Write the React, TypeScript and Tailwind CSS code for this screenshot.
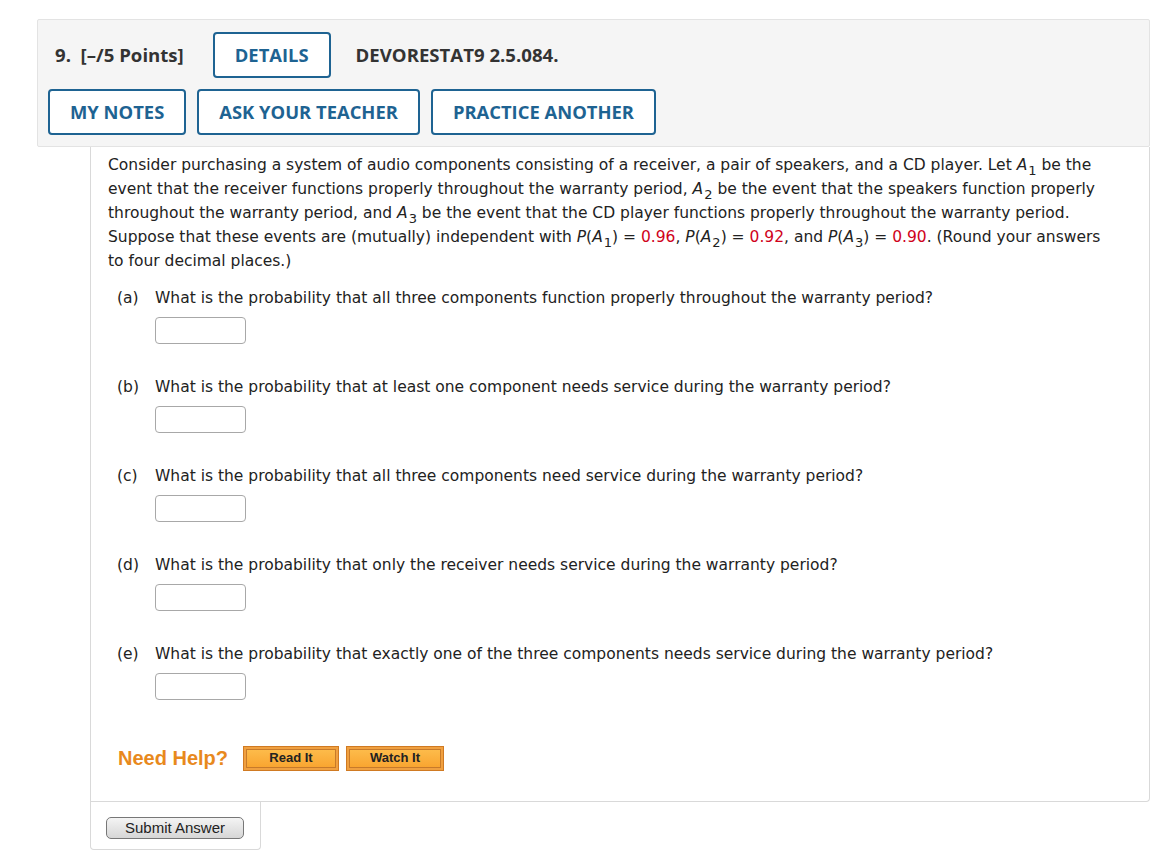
import React from 'react';

const parts = [
  { label: '(a)', text: 'What is the probability that all three components function properly throughout the warranty period?' },
  { label: '(b)', text: 'What is the probability that at least one component needs service during the warranty period?' },
  { label: '(c)', text: 'What is the probability that all three components need service during the warranty period?' },
  { label: '(d)', text: 'What is the probability that only the receiver needs service during the warranty period?' },
  { label: '(e)', text: 'What is the probability that exactly one of the three components needs service during the warranty period?' },
];

function A({ n }: { n: number }) {
  return (
    <>
      <i>A</i>
      <sub className="text-[13px] relative top-[5px] align-baseline ml-[1px]">{n}</sub>
    </>
  );
}

function Red({ children }: { children: React.ReactNode }) {
  return <span className="text-[#d0021b]">{children}</span>;
}

function BlueButton({ children }: { children: React.ReactNode }) {
  return (
    <button className="h-[46px] px-[20px] border-2 border-[#1e6392] rounded-[4px] bg-white text-[#1e6392] text-[18.4px] font-bold">
      {children}
    </button>
  );
}

function OrangeButton({ children, w }: { children: React.ReactNode; w: string }) {
  return (
    <button className={`${w} h-[25px] bg-[#f0a040] border border-[#d07a22] p-[2px]`}>
      <span className="flex h-full items-center justify-center border border-[#c77a2a] bg-gradient-to-b from-[#fdbb4a] to-[#f9a530] text-[13px] font-bold text-[#222] font-['Liberation_Sans',Arial,sans-serif]">
        {children}
      </span>
    </button>
  );
}

export default function App() {
  return (
    <div className="min-h-screen bg-white pt-[19px] font-['Open_Sans',sans-serif]">
      <div className="ml-[37px] w-[1113px] h-[128px] bg-[#f5f5f5] border border-[#e3e3e3] rounded-[2px] pl-[10px] pt-[12px]">
        <div className="flex items-center h-[46px]">
          <span className="ml-[7px] text-[18.6px] font-bold text-[#333]">9.&nbsp;&nbsp;[–/5 Points]</span>
          <span className="ml-[29px]"><BlueButton>DETAILS</BlueButton></span>
          <span className="ml-[25px] text-[18.6px] font-bold text-[#333]">DEVORESTAT9 2.5.084.</span>
        </div>
        <div className="flex items-center gap-[11px] mt-[11px]">
          <BlueButton>MY NOTES</BlueButton>
          <BlueButton>ASK YOUR TEACHER</BlueButton>
          <BlueButton>PRACTICE ANOTHER</BlueButton>
        </div>
      </div>

      <div className="ml-[90px] w-[1060px] border-l border-r border-b border-[#d9d9d9] rounded-br-[4px] pl-[17px] pt-[6px] pb-[28px] font-['DejaVu_Sans',Verdana,sans-serif] text-[15.5px] text-[#222]">
        <p className="leading-[24px] pr-[40px]">
          Consider purchasing a system of audio components consisting of a receiver, a pair of speakers, and a CD player. Let <A n={1} /> be the event that the receiver functions properly throughout the warranty period, <A n={2} /> be the event that the speakers function properly throughout the warranty period, and <A n={3} /> be the event that the CD player functions properly throughout the warranty period. Suppose that these events are (mutually) independent with <i>P</i>(<A n={1} />) = <Red>0.96</Red>, <i>P</i>(<A n={2} />) = <Red>0.92</Red>, and <i>P</i>(<A n={3} />) = <Red>0.90</Red>. (Round your answers to four decimal places.)
        </p>
        <div className="mt-[13px] pl-[9px] flex flex-col gap-[31px]">
          {parts.map((p) => (
            <div key={p.label}>
              <div className="flex leading-[24px]">
                <span className="w-[38px]">{p.label}</span>
                <span>{p.text}</span>
              </div>
              <div className="ml-[38px] mt-[7px] w-[91px] h-[27px] border border-[#a8a8a8] rounded-[4px] bg-white" />
            </div>
          ))}
        </div>
        <div className="flex items-center mt-[43px] ml-[10px]">
          <span className="text-[20px] font-bold text-[#e8891d] font-['Liberation_Sans',Arial,sans-serif]">Need Help?</span>
          <span className="ml-[15px]"><OrangeButton w="w-[96px]">Read It</OrangeButton></span>
          <span className="ml-[7px]"><OrangeButton w="w-[98px]">Watch It</OrangeButton></span>
        </div>
      </div>

      <div className="ml-[90px] w-[171px] h-[48px] border-l border-r border-b border-[#d9d9d9] rounded-b-[4px] pl-[15px] pt-[13px]">
        <button className="w-[138px] h-[22px] rounded-[5px] border border-[#777] bg-gradient-to-b from-[#f4f4f4] to-[#d6d6d6] text-[15px] leading-[20px] text-[#222] font-['Liberation_Sans',Arial,sans-serif]">
          Submit Answer
        </button>
      </div>
    </div>
  );
}
